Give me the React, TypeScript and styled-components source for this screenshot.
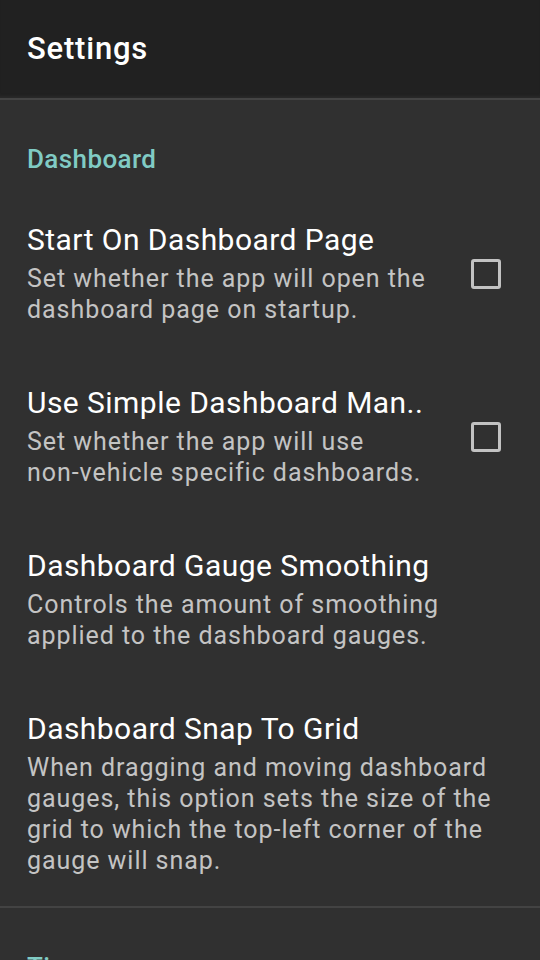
import React from "react"
import styled, { createGlobalStyle } from "styled-components"

const GlobalStyle = createGlobalStyle`
  html, body {
    margin: 0;
    padding: 0;
    background: #303030;
  }
  body {
    font-family: Roboto, "Noto Sans", sans-serif;
    -webkit-font-smoothing: antialiased;
  }
`

const Screen = styled.div`
  width: 540px;
  height: 960px;
  overflow: hidden;
  background: #303030;
  display: flex;
  flex-direction: column;
`

const Toolbar = styled.header`
  flex: none;
  height: 98px;
  background: #212121;
  display: flex;
  align-items: center;
  padding: 0 27px;
  border-bottom: 2px solid #444444;
  box-sizing: content-box;
  box-shadow: inset 0 -4px 3px -2px #2a2a2a;
`

const Title = styled.h1`
  margin: 0;
  margin-top: -2px;
  color: #ffffff;
  font-size: 31px;
  font-weight: 500;
  letter-spacing: 0.8px;
`

const Category = styled.section`
  display: flex;
  flex-direction: column;
  & + & {
    border-top: 2px solid #434343;
  }
`

const CategoryTitle = styled.div`
  padding: 44px 27px 18px;
  color: #80cbc4;
  font-size: 26px;
  font-weight: 500;
  line-height: 30px;
  letter-spacing: 0.4px;
`

const Row = styled.div`
  display: flex;
  align-items: center;
  padding: 30px 39px 30px 27px;
`

const RowText = styled.div`
  flex: 1;
  min-width: 0;
  display: flex;
  flex-direction: column;
  gap: 5px;
`

const RowTitle = styled.div`
  color: #ffffff;
  font-size: 30px;
  line-height: 36px;
  letter-spacing: 0.45px;
  white-space: nowrap;
`

const RowSummary = styled.div`
  color: rgba(255, 255, 255, 0.72);
  font-size: 25px;
  line-height: 31px;
  letter-spacing: 0.95px;
`

const NoWrap = styled.span`
  white-space: nowrap;
`

const CheckBox = styled.div<{ $checked?: boolean }>`
  flex: none;
  width: 24px;
  height: 24px;
  margin-left: 30px;
  border: 3px solid #c2c2c2;
  border-radius: 3px;
  background: ${p => (p.$checked ? "#80cbc4" : "transparent")};
`

interface PrefProps {
  title: string
  summary: React.ReactNode
  checkbox?: boolean
}

const Preference = ({ title, summary, checkbox }: PrefProps) => (
  <Row>
    <RowText>
      <RowTitle>{title}</RowTitle>
      <RowSummary>{summary}</RowSummary>
    </RowText>
    {checkbox && <CheckBox />}
  </Row>
)

export default function App() {
  return (
    <>
      <GlobalStyle />
      <Screen>
        <Toolbar>
          <Title>Settings</Title>
        </Toolbar>
        <Category>
          <CategoryTitle>Dashboard</CategoryTitle>
          <Preference
            title="Start On Dashboard Page"
            summary="Set whether the app will open the dashboard page on startup."
            checkbox
          />
          <Preference
            title="Use Simple Dashboard Man.."
            summary={<>Set whether the app will use <NoWrap>non-vehicle</NoWrap> specific dashboards.</>}
            checkbox
          />
          <Preference
            title="Dashboard Gauge Smoothing"
            summary="Controls the amount of smoothing applied to the dashboard gauges."
          />
          <Preference
            title="Dashboard Snap To Grid"
            summary="When dragging and moving dashboard gauges, this option sets the size of the grid to which the top-left corner of the gauge will snap."
          />
        </Category>
        <Category>
          <CategoryTitle>Time</CategoryTitle>
        </Category>
      </Screen>
    </>
  )
}
